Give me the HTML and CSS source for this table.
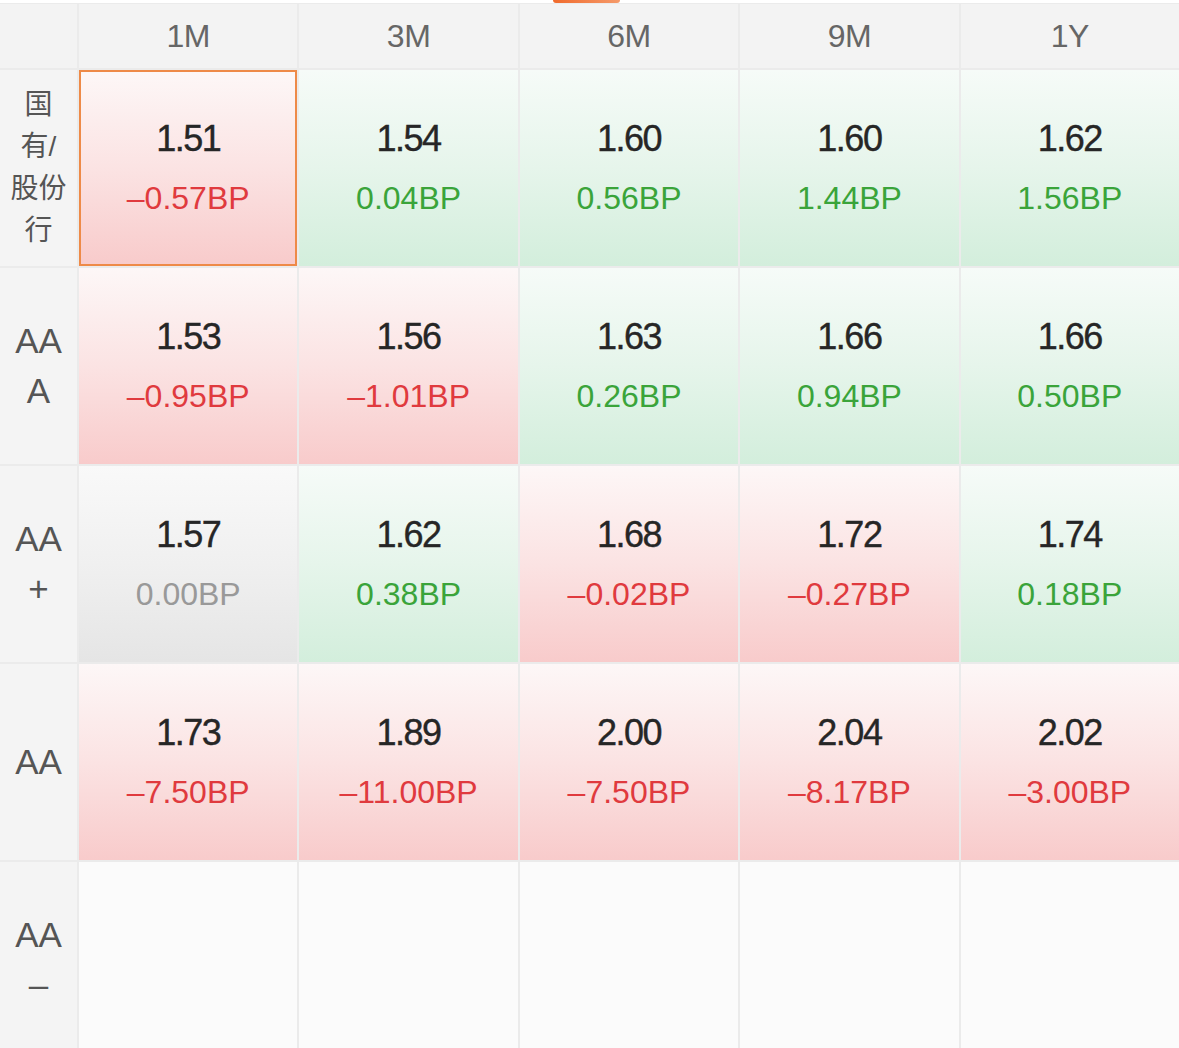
FILE: index.html
```html
<!DOCTYPE html>
<html lang="zh-CN">
    <head>
        <meta charset="UTF-8" />
        <meta name="viewport" content="width=device-width, initial-scale=1.0" />
        <title>存单收益率</title>
        <link rel="stylesheet" href="styles.css">
    </head>
    <body>
        <div class="tab-bar"><span class="tab-indicator"></span></div>
        <div class="rate-grid">
            <div class="head-cell"></div>
            <div class="head-cell">1M</div>
            <div class="head-cell">3M</div>
            <div class="head-cell">6M</div>
            <div class="head-cell">9M</div>
            <div class="head-cell">1Y</div>

            <div class="row-label cjk">国<br>有/<br>股份<br>行</div>
            <div class="rate-cell down active"><span class="rate">1.51</span><span class="change">–0.57BP</span></div>
            <div class="rate-cell up"><span class="rate">1.54</span><span class="change">0.04BP</span></div>
            <div class="rate-cell up"><span class="rate">1.60</span><span class="change">0.56BP</span></div>
            <div class="rate-cell up"><span class="rate">1.60</span><span class="change">1.44BP</span></div>
            <div class="rate-cell up"><span class="rate">1.62</span><span class="change">1.56BP</span></div>

            <div class="row-label">AA<br>A</div>
            <div class="rate-cell down"><span class="rate">1.53</span><span class="change">–0.95BP</span></div>
            <div class="rate-cell down"><span class="rate">1.56</span><span class="change">–1.01BP</span></div>
            <div class="rate-cell up"><span class="rate">1.63</span><span class="change">0.26BP</span></div>
            <div class="rate-cell up"><span class="rate">1.66</span><span class="change">0.94BP</span></div>
            <div class="rate-cell up"><span class="rate">1.66</span><span class="change">0.50BP</span></div>

            <div class="row-label">AA<br>+</div>
            <div class="rate-cell flat"><span class="rate">1.57</span><span class="change">0.00BP</span></div>
            <div class="rate-cell up"><span class="rate">1.62</span><span class="change">0.38BP</span></div>
            <div class="rate-cell down"><span class="rate">1.68</span><span class="change">–0.02BP</span></div>
            <div class="rate-cell down"><span class="rate">1.72</span><span class="change">–0.27BP</span></div>
            <div class="rate-cell up"><span class="rate">1.74</span><span class="change">0.18BP</span></div>

            <div class="row-label">AA</div>
            <div class="rate-cell down"><span class="rate">1.73</span><span class="change">–7.50BP</span></div>
            <div class="rate-cell down"><span class="rate">1.89</span><span class="change">–11.00BP</span></div>
            <div class="rate-cell down"><span class="rate">2.00</span><span class="change">–7.50BP</span></div>
            <div class="rate-cell down"><span class="rate">2.04</span><span class="change">–8.17BP</span></div>
            <div class="rate-cell down"><span class="rate">2.02</span><span class="change">–3.00BP</span></div>

            <div class="row-label">AA<br>–</div>
            <div class="rate-cell empty"></div>
            <div class="rate-cell empty"></div>
            <div class="rate-cell empty"></div>
            <div class="rate-cell empty"></div>
            <div class="rate-cell empty"></div>
        </div>
    </body>
</html>
```

FILE: styles.css
```css
html,
body {
    padding: 0;
    margin: 0;
    overflow: hidden;
}
body {
    background-color: #fff;
    font-family: "Liberation Sans", "Noto Sans CJK SC", sans-serif;
}

.tab-bar {
    display: flex;
    justify-content: center;
    height: 3px;
    background-color: #fff;
}
.tab-indicator {
    width: 67px;
    margin-left: -6px;
    background: linear-gradient(90deg, #f06a2c, #f59a6a);
    border-radius: 0 0 3px 3px;
}

.rate-grid {
    display: grid;
    grid-template-columns: 77px repeat(5, 1fr);
    grid-template-rows: 64px repeat(5, 196px);
    gap: 2px;
    background-color: #ebebeb;
    border-top: 1px solid #ebebeb;
}

.head-cell {
    display: flex;
    align-items: center;
    justify-content: center;
    background-color: #f3f3f3;
    color: #666;
    font-size: 32px;
    letter-spacing: -0.5px;
}

.row-label {
    display: flex;
    align-items: center;
    justify-content: center;
    text-align: center;
    background-color: #f4f4f4;
    color: #555;
    font-size: 35px;
    line-height: 50px;
}
.row-label.cjk {
    font-size: 28px;
    line-height: 42px;
}

.rate-cell {
    display: flex;
    flex-flow: column;
    align-items: center;
    justify-content: center;
    box-sizing: border-box;
}
.rate-cell .rate {
    color: #262626;
    font-size: 36px;
    line-height: 50px;
    letter-spacing: -1.5px;
    -webkit-text-stroke: 0.4px #262626;
}
.rate-cell .change {
    margin-top: 9px;
    font-size: 32px;
    line-height: 50px;
}

.rate-cell.down {
    background: linear-gradient(180deg, #fdf7f7 0%, #fbe3e3 50%, #f8cbcb 100%);
}
.rate-cell.down .change {
    color: #e03a3e;
}
.rate-cell.up {
    background: linear-gradient(180deg, #f6fbf8 0%, #e6f5eb 50%, #d3eedc 100%);
}
.rate-cell.up .change {
    color: #3aa43a;
}
.rate-cell.flat {
    background: linear-gradient(180deg, #f9f9f9 0%, #f0f0f0 50%, #e5e5e5 100%);
}
.rate-cell.flat .change {
    color: #999;
}
.rate-cell.empty {
    background-color: #fbfbfb;
}
.rate-cell.active {
    border: 2px solid #ee8a48;
}
```
